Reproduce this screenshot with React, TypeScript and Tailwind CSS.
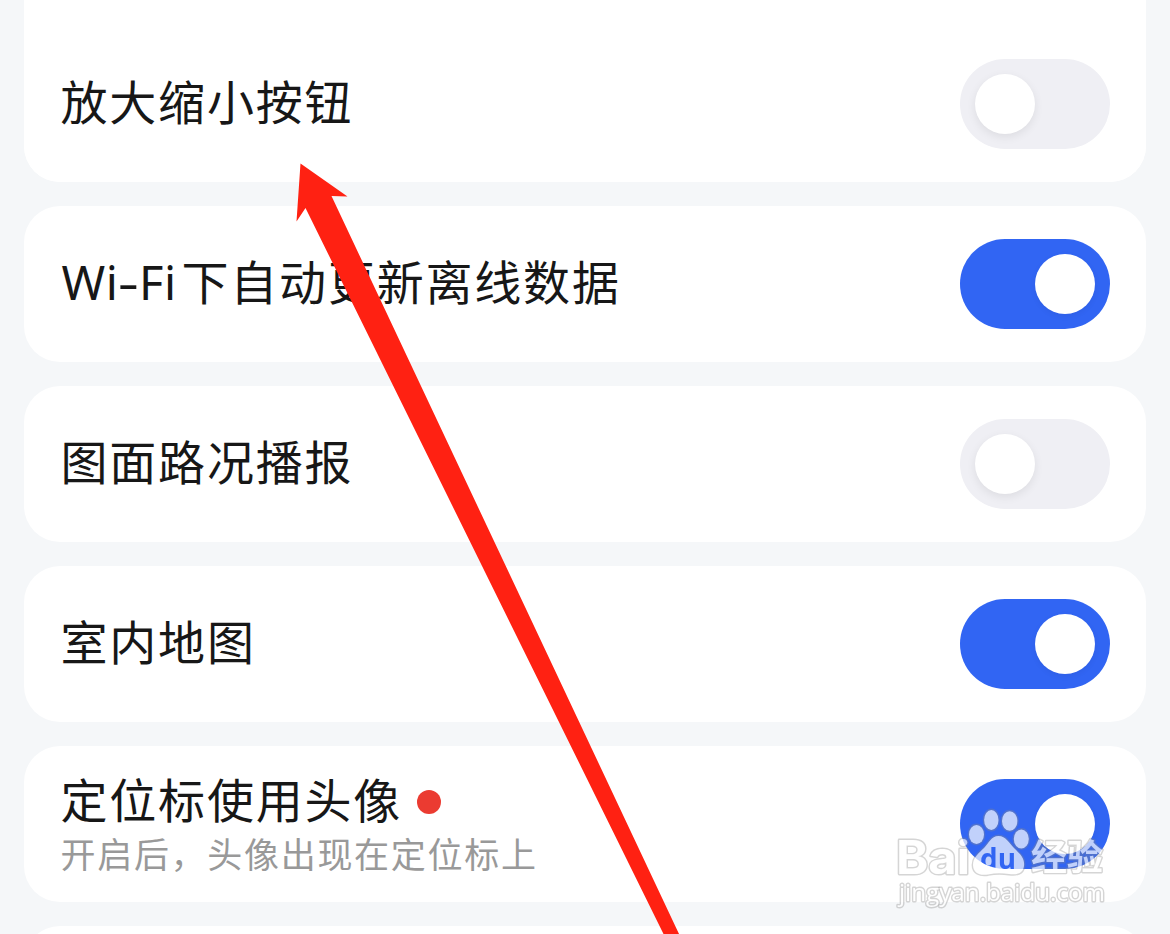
import { useState } from 'react';
import clsx from 'clsx';

interface Setting {
  id: string;
  label: string;
  wifiPrefix?: boolean;
  description?: string;
  enabled: boolean;
  isNew?: boolean;
}

const SETTINGS: Setting[] = [
  { id: 'zoom', label: '放大缩小按钮', enabled: false },
  { id: 'wifi', wifiPrefix: true, label: '下自动更新离线数据', enabled: true },
  { id: 'traffic', label: '图面路况播报', enabled: false },
  { id: 'indoor', label: '室内地图', enabled: true },
  {
    id: 'avatar',
    label: '定位标使用头像',
    description: '开启后，头像出现在定位标上',
    enabled: true,
    isNew: true,
  },
];

interface ToggleProps {
  checked: boolean;
  label: string;
  onChange: () => void;
}

const Toggle = ({ checked, label, onChange }: ToggleProps) => (
  <button
    type="button"
    role="switch"
    aria-checked={checked}
    aria-label={label}
    onClick={onChange}
    className={clsx(
      'flex h-[90px] w-[150px] shrink-0 items-center rounded-full px-[15px]',
      checked ? 'justify-end bg-[#3165f3]' : 'justify-start bg-[#efeff4]'
    )}
  >
    <span
      className={clsx(
        'size-[60px] rounded-full bg-white',
        checked
          ? 'shadow-[0_2px_6px_rgba(0,0,0,0.06)]'
          : 'shadow-[0_3px_10px_rgba(0,0,0,0.08)]'
      )}
    />
  </button>
);

// The hyphen is wider than the font's own
const WifiPrefix = () => (
  <span className="mt-1 inline-block w-[121px] pl-px font-['Noto_Sans',sans-serif] text-[47px] leading-[54px] tracking-[0.5px] whitespace-nowrap">
    Wi
    <span className="mx-[2.5px] inline-block scale-x-140">-</span>
    Fi
  </span>
);

interface SettingCardProps {
  setting: Setting;
  onToggle: (id: string) => void;
}

const SettingCard = ({ setting, onToggle }: SettingCardProps) => (
  <section className="flex h-[156px] shrink-0 items-center justify-between rounded-[36px] bg-white pr-9 pl-[36.5px]">
    <div className={clsx('flex flex-col', !setting.description && 'pb-2')}>
      <div className="flex items-center">
        {setting.wifiPrefix && <WifiPrefix />}
        <h2 className="text-[47px] leading-[54px] tracking-[1.8px]">{setting.label}</h2>
        {setting.isNew && <span className="mt-2 ml-[14.5px] size-6 rounded-full bg-[#eb3b31]" />}
      </div>
      {setting.description && (
        <p className="-mb-0.5 pt-0.5 text-[35px] leading-[52px] tracking-[1.7px] text-[#999999]">
          {setting.description}
        </p>
      )}
    </div>
    <Toggle
      checked={setting.enabled}
      label={setting.label}
      onChange={() => onToggle(setting.id)}
    />
  </section>
);

// Red pointer to the first setting
const PointerArrow = () => (
  <svg
    className="pointer-events-none absolute top-0 left-0"
    width="1170"
    height="934"
    viewBox="0 0 1170 934"
    aria-hidden="true"
  >
    <path
      d="M300.5 163.5 L347.5 196.5 L331.5 196 L679.5 935 L664 935 L305.5 208 L296.5 221.5 Z"
      fill="#ff2112"
    />
  </svg>
);

const Watermark = () => (
  <svg
    className="pointer-events-none absolute right-[54px] bottom-[18px] opacity-70"
    width="226"
    height="112"
    viewBox="890 804 226 112"
    aria-hidden="true"
  >
    <defs>
      <mask id="paw-cut" maskUnits="userSpaceOnUse" x="890" y="804" width="226" height="112">
        <rect x="890" y="804" width="226" height="112" fill="white" />
        <text
          x="980"
          y="868.5"
          textLength="36"
          lengthAdjust="spacingAndGlyphs"
          className="font-['Open_Sans',sans-serif] text-[29px] font-bold"
          fill="black"
        >
          du
        </text>
      </mask>
    </defs>
    <g
      fill="white"
      stroke="#8a8a8a"
      strokeOpacity="0.5"
      strokeWidth="2.8"
      strokeLinejoin="round"
      className="[paint-order:stroke]"
    >
      <text
        x="896"
        y="873.5"
        textLength="74"
        lengthAdjust="spacingAndGlyphs"
        className="font-['Inter',sans-serif] text-[46px] font-bold"
      >
        Bai
      </text>
      <text
        x="1031"
        y="870"
        textLength="72"
        lengthAdjust="spacingAndGlyphs"
        className="font-['Noto_Sans_CJK_SC',sans-serif] text-[35px] font-bold"
      >
        经验
      </text>
      <text
        x="899"
        y="901"
        textLength="206"
        lengthAdjust="spacingAndGlyphs"
        className="font-['Open_Sans',sans-serif] text-[24px]"
      >
        jingyan.baidu.com
      </text>
    </g>
    <g
      fill="white"
      stroke="#8a8a8a"
      strokeOpacity="0.5"
      strokeWidth="2.8"
      mask="url(#paw-cut)"
      className="[paint-order:stroke]"
    >
      <ellipse cx="976.5" cy="834.5" rx="7.5" ry="9.5" />
      <ellipse cx="991.3" cy="820" rx="7.2" ry="10" />
      <ellipse cx="1009.7" cy="821" rx="7.7" ry="9.8" />
      <ellipse cx="1021.3" cy="839" rx="7.5" ry="9.5" />
      <path d="M998.5 836 C1006 836 1009 843 1014 848 C1020 854 1025 858 1024 866 C1023 874 1016 875 1009 874 C1002 873 995 873 988 874.5 C980 876 973 873 973 865 C973 857 979 853 984 848 C989 843 991 836 998.5 836 Z" />
    </g>
  </svg>
);

export default function App() {
  const [settings, setSettings] = useState(SETTINGS);

  const handleToggle = (id: string) => {
    setSettings(prev =>
      prev.map(item => (item.id === id ? { ...item, enabled: !item.enabled } : item))
    );
  };

  return (
    <div className="relative h-[934px] w-[1170px] overflow-hidden bg-[#f5f7f9] font-['Noto_Sans_CJK_SC',sans-serif] text-[#171717]">
      <main className="-mt-9 flex flex-col gap-6 px-6">
        {settings.map((setting, index) => (
          <div
            key={setting.id}
            className={clsx(index === 0 && 'rounded-b-[36px] bg-white pt-[62px]')}
          >
            <SettingCard setting={setting} onToggle={handleToggle} />
          </div>
        ))}
        <section className="h-[156px] shrink-0 rounded-[36px] bg-white" />
      </main>
      <PointerArrow />
      <Watermark />
    </div>
  );
}
